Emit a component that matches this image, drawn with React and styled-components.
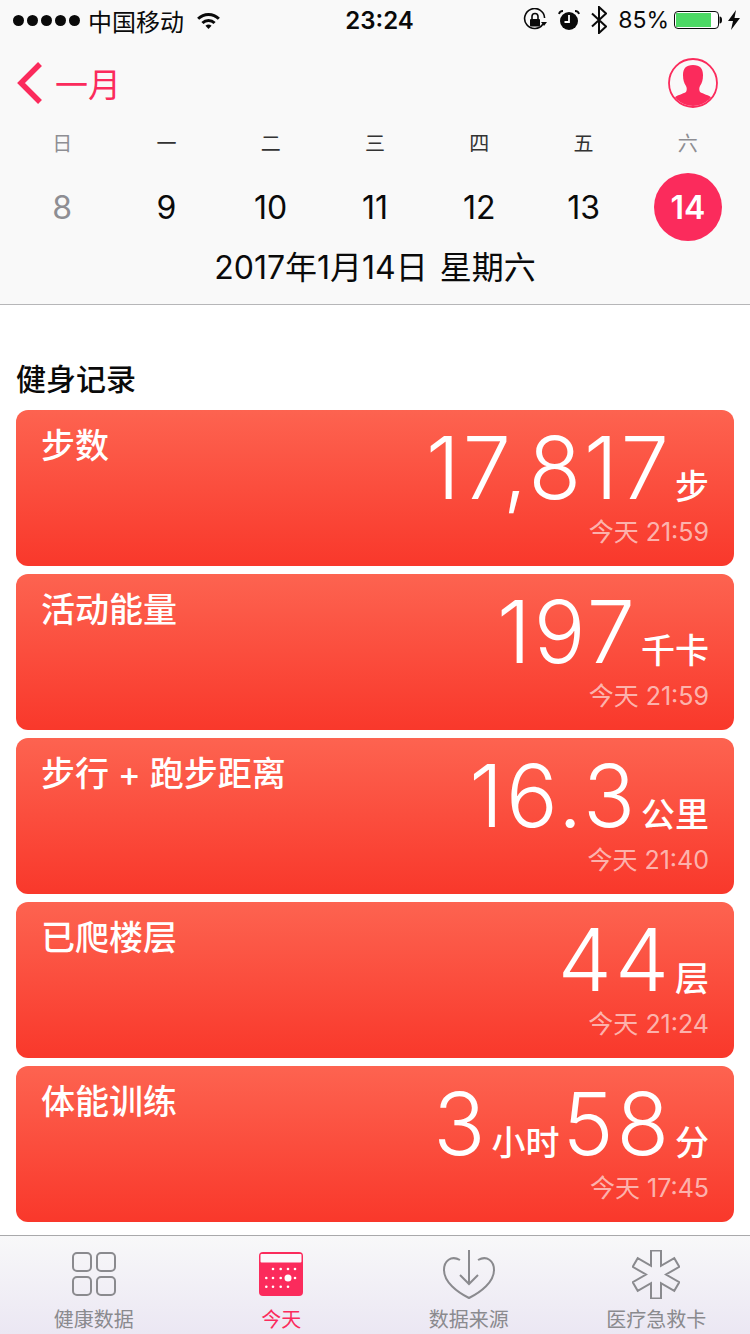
import React from "react";
import styled, { createGlobalStyle } from "styled-components";

const SANS = `Inter, "Noto Sans CJK SC", sans-serif`;
const PINK = "#fb2b5c";

const GlobalStyle = createGlobalStyle`
  html, body { margin: 0; padding: 0; background: #fff; }
  * { box-sizing: border-box; }
`;

const Page = styled.div`
  width: 750px;
  height: 1334px;
  display: flex;
  flex-direction: column;
  overflow: hidden;
  font-family: ${SANS};
  background: #fff;
`;

const Header = styled.header`
  height: 305px;
  flex: none;
  background: #f9f9f9;
  border-bottom: 1px solid #b6b6b8;
`;

const StatusBar = styled.div`
  height: 40px;
  padding: 0 10px 0 13px;
  display: flex;
  align-items: center;
  justify-content: space-between;
  color: #0a0a0a;
`;

const StatusSide = styled.div`
  width: ${(p) => p.$width}px;
  display: flex;
  align-items: center;
  justify-content: ${(p) => (p.$end ? "flex-end" : "flex-start")};
  gap: ${(p) => p.$gap}px;
  font-size: 24px;
`;

const Dots = styled.div`
  display: flex;
  gap: 3px;
`;

const Dot = styled.span`
  width: 11px;
  height: 11px;
  border-radius: 50%;
  background: #0a0a0a;
`;

const Clock = styled.div`
  font-size: 24px;
  font-weight: 600;
`;

const Percent = styled.span`
  margin-right: -6px;
  font-size: 23px;
`;

const BoltSvg = styled.svg`
  margin-left: -5px;
`;

const WifiSvg = styled.svg`
  margin-left: 4px;
`;

const NavRow = styled.div`
  height: 86px;
  padding: 0 32px 0 16px;
  display: flex;
  align-items: center;
  justify-content: space-between;
`;

const BackLink = styled.div`
  display: flex;
  align-items: center;
  gap: 12px;
  color: ${PINK};
  font-size: 33px;
`;

const WeekGrid = styled.div`
  padding: 0 10px;
  display: grid;
  grid-template-columns: repeat(7, 1fr);
  justify-items: center;
`;

const WeekDay = styled.div`
  height: 36px;
  font-size: 20px;
  line-height: 36px;
  color: ${(p) => (p.$muted ? "#8e8e93" : "#333")};
`;

const DayNum = styled.div`
  width: 68px;
  height: 68px;
  margin-top: 11px;
  border-radius: 50%;
  display: flex;
  align-items: center;
  justify-content: center;
  font-size: 32px;
  font-weight: ${(p) => (p.$active ? 600 : 400)};
  color: ${(p) => (p.$active ? "#fff" : p.$muted ? "#8e8e93" : "#0a0a0a")};
  background: ${(p) => (p.$active ? PINK : "transparent")};
`;

const DateLine = styled.div`
  margin-top: 5px;
  text-align: center;
  font-size: 32px;
  line-height: 44px;
  word-spacing: 3px;
  color: #0a0a0a;
`;

const Main = styled.main`
  flex: 1;
  padding: 52px 16px 0;
`;

const SectionTitle = styled.h2`
  margin: 0 0 8px;
  font-size: 30px;
  line-height: 45px;
  font-weight: 500;
  color: #0a0a0a;
`;

const CardList = styled.div`
  display: flex;
  flex-direction: column;
  gap: 8px;
`;

const Card = styled.div`
  height: 156px;
  padding: 14px 25px 0 25px;
  border-radius: 12px;
  display: flex;
  justify-content: space-between;
  color: #fff;
  background: linear-gradient(180deg, #fd6350 0%, #f9382b 100%);
`;

const CardTitle = styled.div`
  font-size: 34px;
  line-height: 44px;
  font-weight: 500;
`;

const CardRight = styled.div`
  display: flex;
  flex-direction: column;
  align-items: flex-end;
`;

const ValueRow = styled.div`
  height: 88px;
  display: flex;
  align-items: baseline;
  gap: 3px;
  line-height: 88px;
`;

const Big = styled.span`
  font-size: 86px;
  font-weight: 300;
  letter-spacing: 3px;
`;

const Unit = styled.span`
  font-size: 34px;
  font-weight: 500;
`;

const When = styled.div`
  margin-top: 2px;
  font-size: 25px;
  line-height: 36px;
  color: rgba(255, 255, 255, 0.62);
`;

const TabBar = styled.nav`
  height: 99px;
  flex: none;
  display: grid;
  grid-template-columns: repeat(4, 187.5px);
  border-top: 1px solid #a9a9ab;
  background: linear-gradient(180deg, #f8f8f9 0%, #ebe7f3 100%);
`;

const Tab = styled.div`
  padding-top: 12px;
  display: flex;
  flex-direction: column;
  align-items: center;
  color: ${(p) => (p.$active ? PINK : "#8a8a8e")};
`;

const TabIcon = styled.div`
  height: 52px;
  display: flex;
  align-items: center;
  justify-content: center;
`;

const TabLabel = styled.div`
  margin-top: 6px;
  font-size: 20px;
  line-height: 28px;
`;

const WifiIcon = () => (
  <WifiSvg width="25" height="19" viewBox="0 0 26 20">
    <path d="M1 7a17 17 0 0 1 24 0l-2.2 2.2a14 14 0 0 0-19.6 0z" fill="#0a0a0a" />
    <path d="M5.5 11.5a11 11 0 0 1 15 0l-2.2 2.2a8 8 0 0 0-10.6 0z" fill="#0a0a0a" />
    <path d="M9.8 15.6a5 5 0 0 1 6.4 0L13 19z" fill="#0a0a0a" />
  </WifiSvg>
);

const LockIcon = () => (
  <svg width="24" height="24" viewBox="0 0 24 24">
    <path d="M20 16a10 10 0 1 1 1.6-6" fill="none" stroke="#0a0a0a" strokeWidth="1.6" />
    <path d="M18 14h6l-3 4z" fill="#0a0a0a" />
    <rect x="7" y="11" width="10" height="7.5" rx="1" fill="#0a0a0a" />
    <path d="M9 11V8.5a3 3 0 0 1 6 0V11" fill="none" stroke="#0a0a0a" strokeWidth="1.6" />
  </svg>
);

const AlarmIcon = () => (
  <svg width="22" height="22" viewBox="0 0 22 22">
    <circle cx="11" cy="12" r="9" fill="#0a0a0a" />
    <path d="M11 6v7H6.5" fill="none" stroke="#fff" strokeWidth="1.8" />
    <path d="M1 5a4 4 0 0 1 4-3M21 5a4 4 0 0 0-4-3" fill="none" stroke="#0a0a0a" strokeWidth="1.8" />
  </svg>
);

const BluetoothIcon = () => (
  <svg width="16" height="28" viewBox="0 0 16 28">
    <path d="M1 7.5l14 13L8 27V1l7 6.5-14 13" fill="none" stroke="#0a0a0a" strokeWidth="2" />
  </svg>
);

const BatteryIcon = () => (
  <svg width="48" height="18" viewBox="0 0 48 18">
    <rect x="0.5" y="0.5" width="44" height="17" rx="3.5" fill="#fff" stroke="#0a0a0a" />
    <rect x="2" y="2" width="35" height="14" fill="#4cd964" />
    <path d="M45.5 5.5c2 0 2.5 1.5 2.5 3.5s-.5 3.5-2.5 3.5z" fill="#0a0a0a" />
  </svg>
);

const BoltIcon = () => (
  <BoltSvg width="12" height="20" viewBox="0 0 12 20">
    <path d="M8 0L0 11h5l-2 9 9-12H6.5z" fill="#0a0a0a" />
  </BoltSvg>
);

const Chevron = () => (
  <svg width="27" height="44" viewBox="0 0 27 44">
    <path d="M24 3L5 22l19 19" fill="none" stroke={PINK} strokeWidth="5.5" />
  </svg>
);

const ProfileIcon = () => (
  <svg width="50" height="50" viewBox="0 0 50 50">
    <defs>
      <clipPath id="profile-clip">
        <circle cx="25" cy="25" r="23" />
      </clipPath>
    </defs>
    <circle cx="25" cy="25" r="24" fill="none" stroke={PINK} strokeWidth="1.8" />
    <path
      clipPath="url(#profile-clip)"
      d="M25 7c-7 0-10 3.5-10 10 0 5 1 8 3 11 1 2 1 4 0 6-3 2-9 3-12 6v10h38V40c-3-3-9-4-12-6-1-2-1-4 0-6 2-3 3-6 3-11 0-6.5-3-10-10-10z"
      fill={PINK}
    />
  </svg>
);

const GridIcon = () => (
  <svg width="44" height="44" viewBox="0 0 44 44" fill="none" stroke="#8a8a8e" strokeWidth="2">
    <rect x="1" y="1" width="18" height="18" rx="4" />
    <rect x="25" y="1" width="18" height="18" rx="4" />
    <rect x="1" y="25" width="18" height="18" rx="4" />
    <rect x="25" y="25" width="18" height="18" rx="4" />
  </svg>
);

const calendarDots = [
  [14, 17], [21.7, 17], [29, 17], [36, 17],
  [7.3, 26], [14, 26], [21.7, 26], [36, 26],
  [7.3, 34.7], [14, 34.7], [21.7, 34.7], [29, 34.7],
];

const CalendarIcon = () => (
  <svg width="44" height="44" viewBox="0 0 44 44">
    <rect width="44" height="44" rx="4" fill={PINK} />
    <rect x="1.5" y="2" width="41" height="8.5" rx="1" fill="#fbf8fb" />
    {calendarDots.map(([x, y], i) => (
      <circle key={i} cx={x} cy={y} r="1.3" fill="#fff" />
    ))}
    <circle cx="29" cy="26" r="3.5" fill="#fff" />
  </svg>
);

const HeartIcon = () => (
  <svg width="52" height="49" viewBox="0 0 52 49" fill="none" stroke="#8a8a8e" strokeWidth="2">
    <path d="M17 10C8 5 1 11 1 20c0 12 13 22 25 28 12-6 25-16 25-28 0-9-7-15-16-10" />
    <path d="M26 0v34M17 25l9 9 9-9" />
  </svg>
);

const StarIcon = () => (
  <svg width="48" height="49" viewBox="0 0 48 49" fill="none" stroke="#8a8a8e" strokeWidth="2">
    <path d="M19 .5h10v15.34l13.28-7.67 5 8.66L34 24.5l13.28 7.67-5 8.66L29 33.16V48.5H19V33.16L5.72 40.83l-5-8.66L14 24.5.72 16.83l5-8.66L19 15.84z" />
  </svg>
);

const weekDays = ["日", "一", "二", "三", "四", "五", "六"];
const dayNums = [8, 9, 10, 11, 12, 13, 14];

const records = [
  { title: "步数", parts: [["17,817", "步"]], when: "今天 21:59" },
  { title: "活动能量", parts: [["197", "千卡"]], when: "今天 21:59" },
  { title: "步行 + 跑步距离", parts: [["16.3", "公里"]], when: "今天 21:40" },
  { title: "已爬楼层", parts: [["44", "层"]], when: "今天 21:24" },
  { title: "体能训练", parts: [["3", "小时"], ["58", "分"]], when: "今天 17:45" },
];

const tabs = [
  { label: "健康数据", icon: <GridIcon /> },
  { label: "今天", icon: <CalendarIcon />, active: true },
  { label: "数据来源", icon: <HeartIcon /> },
  { label: "医疗急救卡", icon: <StarIcon /> },
];

export default function App() {
  return (
    <Page>
      <GlobalStyle />
      <Header>
        <StatusBar>
          <StatusSide $width={303} $gap={8}>
            <Dots>
              {[0, 1, 2, 3, 4].map((i) => (
                <Dot key={i} />
              ))}
            </Dots>
            <span>中国移动</span>
            <WifiIcon />
          </StatusSide>
          <Clock>23:24</Clock>
          <StatusSide $end $width={297} $gap={11}>
            <LockIcon />
            <AlarmIcon />
            <BluetoothIcon />
            <Percent>85%</Percent>
            <BatteryIcon />
            <BoltIcon />
          </StatusSide>
        </StatusBar>
        <NavRow>
          <BackLink>
            <Chevron />
            一月
          </BackLink>
          <ProfileIcon />
        </NavRow>
        <WeekGrid>
          {weekDays.map((d, i) => (
            <WeekDay key={d} $muted={i === 0 || i === 6}>
              {d}
            </WeekDay>
          ))}
          {dayNums.map((n, i) => (
            <DayNum key={n} $muted={i === 0} $active={i === 6}>
              {n}
            </DayNum>
          ))}
        </WeekGrid>
        <DateLine>2017年1月14日 星期六</DateLine>
      </Header>
      <Main>
        <SectionTitle>健身记录</SectionTitle>
        <CardList>
          {records.map((r) => (
            <Card key={r.title}>
              <CardTitle>{r.title}</CardTitle>
              <CardRight>
                <ValueRow>
                  {r.parts.map(([value, unit]) => (
                    <React.Fragment key={unit}>
                      <Big>{value}</Big>
                      <Unit>{unit}</Unit>
                    </React.Fragment>
                  ))}
                </ValueRow>
                <When>{r.when}</When>
              </CardRight>
            </Card>
          ))}
        </CardList>
      </Main>
      <TabBar>
        {tabs.map((t) => (
          <Tab key={t.label} $active={t.active}>
            <TabIcon>{t.icon}</TabIcon>
            <TabLabel>{t.label}</TabLabel>
          </Tab>
        ))}
      </TabBar>
    </Page>
  );
}
